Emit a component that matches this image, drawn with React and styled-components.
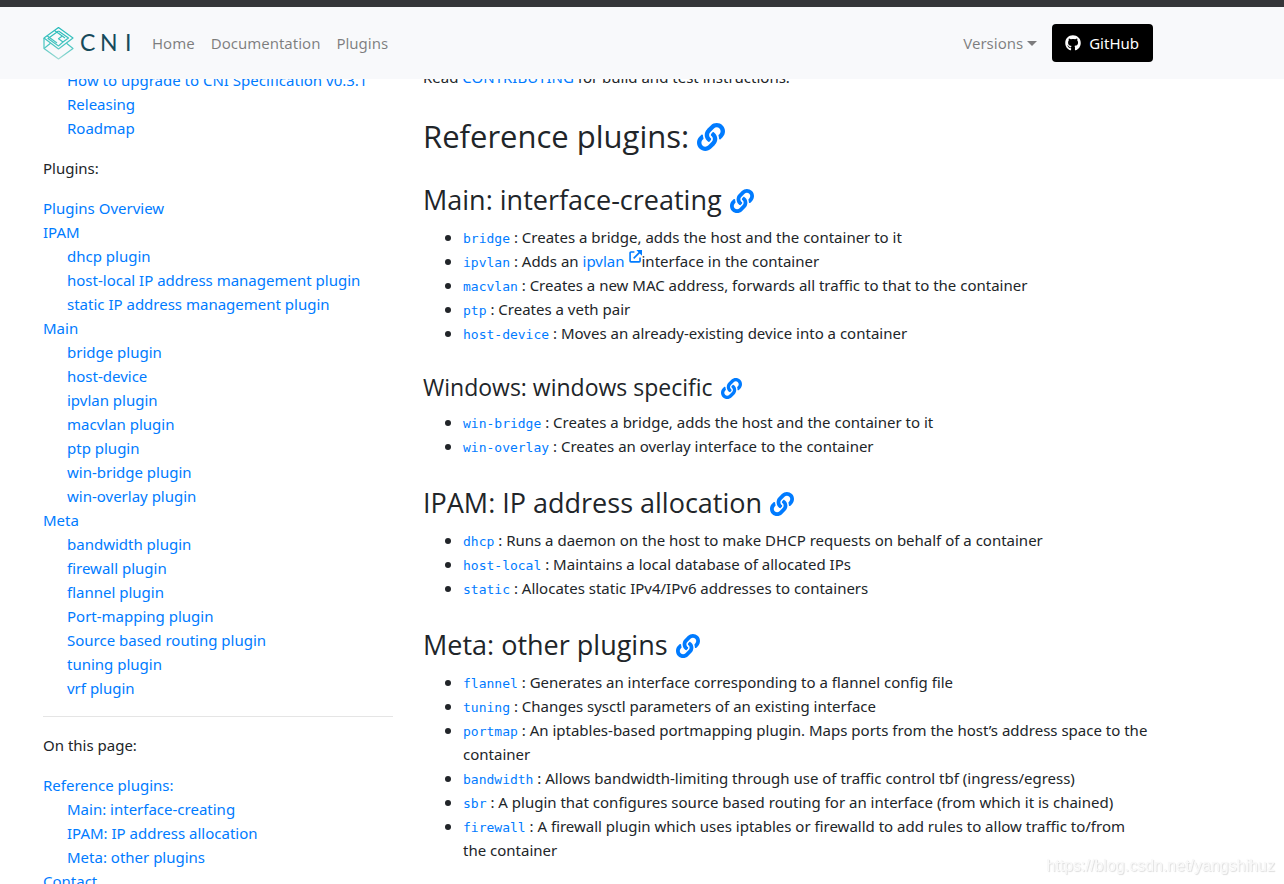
import React from "react";
import styled, { createGlobalStyle } from "styled-components";
import { FaGithub, FaLink } from "react-icons/fa";

const GlobalStyle = createGlobalStyle`
  *, *::before, *::after {
    box-sizing: border-box;
  }
  body {
    margin: 0;
    background: #fff;
    color: #212529;
    font-family: "Noto Sans", "Open Sans", sans-serif;
    font-size: 15px;
    line-height: 24px;
  }
`;

const Page = styled.div`
  height: 100vh;
  overflow: hidden;
`;

const Header = styled.header`
  position: sticky;
  top: 0;
  z-index: 10;
  background: #f8f9fb;
  border-top: 7px solid #353639;
`;

const Container = styled.div`
  max-width: 1168px;
  padding: 0 15px 0 43px;
`;

const Navbar = styled(Container)`
  display: flex;
  align-items: center;
  min-height: 72px;
`;

const Brand = styled.a`
  display: flex;
  margin-right: 9px;
`;

const NavLinks = styled.nav`
  display: flex;
  flex-grow: 1;
`;

const NavLink = styled.a`
  padding: 8px;
  color: rgba(0, 0, 0, 0.5);
  text-decoration: none;
`;

const VersionsButton = styled.button`
  display: flex;
  align-items: center;
  gap: 4px;
  padding: 8px;
  margin-right: 7px;
  border: 0;
  background: none;
  color: rgba(0, 0, 0, 0.5);
  font: inherit;
  cursor: pointer;
  &::after {
    content: "";
    border-top: 5px solid;
    border-left: 5px solid transparent;
    border-right: 5px solid transparent;
  }
`;

const GithubLink = styled.a`
  display: flex;
  align-items: center;
  gap: 8px;
  padding: 7px 14px 7px 13px;
  border-radius: 4px;
  background: #000;
  color: #fff;
  text-decoration: none;
`;

const Columns = styled(Container)`
  display: grid;
  grid-template-columns: minmax(0, 350fr) minmax(0, 730fr);
  gap: 30px;
`;

/* both columns are scrolled a little way under the header */
const Sidebar = styled.aside`
  margin-top: -11px;
`;

const Main = styled.main`
  margin-top: -14px;
`;

const Paragraph = styled.p`
  margin: 0 0 16px;
`;

const Link = styled.a`
  color: #007bff;
  text-decoration: none;
  &:hover {
    text-decoration: underline;
  }
`;

const Tree = styled.ul`
  margin: 0 0 ${(props) => (props.$nested ? 0 : "16px")};
  padding: 0 0 0 ${(props) => (props.$nested ? "24px" : 0)};
  list-style: none;
`;

const Divider = styled.hr`
  margin: 16px 0;
  border: 0;
  border-top: 1px solid rgba(0, 0, 0, 0.1);
`;

const headingSizes = {
  h2: { font: "31px", line: "38px", icon: "28px" },
  h3: { font: "27px", line: "34px", icon: "24px" },
  h4: { font: "23px", line: "29px", icon: "21px" },
};

const Heading = styled.h2`
  display: flex;
  align-items: center;
  gap: 8px;
  margin: 28px 0 8px;
  font-family: "Open Sans", "Noto Sans", sans-serif;
  font-size: ${(props) => headingSizes[props.as].font};
  font-weight: 400;
  line-height: ${(props) => headingSizes[props.as].line};
  svg {
    display: block;
    width: ${(props) => headingSizes[props.as].icon};
    height: ${(props) => headingSizes[props.as].icon};
    margin-top: 2px;
  }
`;

const PluginList = styled.ul`
  margin: 0 0 16px;
  padding-left: 40px;
  list-style: none;
`;

const PluginItem = styled.li`
  &::before {
    content: "";
    display: inline-block;
    width: 6px;
    height: 6px;
    margin: 0 12px 2px -18px;
    border-radius: 50%;
    background: currentColor;
  }
`;

const Code = styled.code`
  font-family: "DejaVu Sans Mono", monospace;
  font-size: 13px;
  line-height: 1;
`;

const ExternalSvg = styled.svg`
  margin-left: 4px;
  vertical-align: 4px;
`;

const Watermark = styled.div`
  position: fixed;
  right: 9px;
  bottom: 6px;
  color: #fafafa;
  font-family: "Liberation Sans", sans-serif;
  font-size: 16px;
  text-shadow: 1px 1px 1px #ddd, 0 0 1px #eee;
`;

const Logo = () => (
  <svg width="92" height="34" viewBox="0 0 92 34" role="img" aria-label="CNI">
    <defs>
      <linearGradient
        id="mark"
        gradientUnits="userSpaceOnUse"
        x1="0"
        y1="0"
        x2="0"
        y2="34"
      >
        <stop offset="0" stopColor="#22b9b9" />
        <stop offset="0.6" stopColor="#4cc6c1" />
        <stop offset="1" stopColor="#a5dcd5" />
      </linearGradient>
    </defs>
    <g fill="none" stroke="url(#mark)" strokeWidth="1.2" strokeLinejoin="round">
      <path d="M15.5 1.5 L30 12 L15.5 23 L1 12 Z" />
      <path d="M15.5 5 L25.5 12 L20 16 L15.5 12.8 L19 10.3" />
      <path d="M15.5 5 L5 12.5 L15.5 20 L20 16" />
      <path d="M4 9.8 L14 17 M11.5 4.5 L22 12" />
      <path d="M1 12 V22.5 L15.5 33 L30 22.5 L23.5 17.3" />
      <path d="M1 22.5 L7.5 17.3" />
    </g>
    <text
      x="37 57 82"
      y="25"
      fill="#164a5b"
      fontFamily="Lato, sans-serif"
      fontSize="23"
    >
      CNI
    </text>
  </svg>
);

const ExternalIcon = () => (
  <ExternalSvg width="13" height="13" viewBox="0 0 12 12" aria-hidden="true">
    <path
      d="M5 1.8 H1.8 Q1 1.8 1 2.6 V10.2 Q1 11 1.8 11 H9.4 Q10.2 11 10.2 10.2 V7 M4.3 7.7 L10 2"
      fill="none"
      stroke="currentColor"
      strokeWidth="1.5"
    />
    <path d="M6.8 0 H12 V5.2 Z" fill="currentColor" />
  </ExternalSvg>
);

const releaseLinks = [
  "How to upgrade to CNI Specification v0.3.1",
  "Releasing",
  "Roadmap",
];

const pluginLinks = [
  { label: "Plugins Overview" },
  {
    label: "IPAM",
    children: [
      "dhcp plugin",
      "host-local IP address management plugin",
      "static IP address management plugin",
    ],
  },
  {
    label: "Main",
    children: [
      "bridge plugin",
      "host-device",
      "ipvlan plugin",
      "macvlan plugin",
      "ptp plugin",
      "win-bridge plugin",
      "win-overlay plugin",
    ],
  },
  {
    label: "Meta",
    children: [
      "bandwidth plugin",
      "firewall plugin",
      "flannel plugin",
      "Port-mapping plugin",
      "Source based routing plugin",
      "tuning plugin",
      "vrf plugin",
    ],
  },
];

const pageLinks = [
  {
    label: "Reference plugins:",
    children: [
      "Main: interface-creating",
      "IPAM: IP address allocation",
      "Meta: other plugins",
    ],
  },
  { label: "Contact" },
];

const sections = [
  {
    title: "Main: interface-creating",
    level: "h3",
    items: [
      ["bridge", "Creates a bridge, adds the host and the container to it"],
      [
        "ipvlan",
        <>
          Adds an{" "}
          <Link href="#ipvlan">
            ipvlan
            <ExternalIcon />
          </Link>
          interface in the container
        </>,
      ],
      [
        "macvlan",
        "Creates a new MAC address, forwards all traffic to that to the container",
      ],
      ["ptp", "Creates a veth pair"],
      ["host-device", "Moves an already-existing device into a container"],
    ],
  },
  {
    title: "Windows: windows specific",
    level: "h4",
    items: [
      ["win-bridge", "Creates a bridge, adds the host and the container to it"],
      ["win-overlay", "Creates an overlay interface to the container"],
    ],
  },
  {
    title: "IPAM: IP address allocation",
    level: "h3",
    items: [
      [
        "dhcp",
        "Runs a daemon on the host to make DHCP requests on behalf of a container",
      ],
      ["host-local", "Maintains a local database of allocated IPs"],
      ["static", "Allocates static IPv4/IPv6 addresses to containers"],
    ],
  },
  {
    title: "Meta: other plugins",
    level: "h3",
    items: [
      [
        "flannel",
        "Generates an interface corresponding to a flannel config file",
      ],
      ["tuning", "Changes sysctl parameters of an existing interface"],
      [
        "portmap",
        "An iptables-based portmapping plugin. Maps ports from the host’s address space to the container",
      ],
      [
        "bandwidth",
        "Allows bandwidth-limiting through use of traffic control tbf (ingress/egress)",
      ],
      [
        "sbr",
        "A plugin that configures source based routing for an interface (from which it is chained)",
      ],
      [
        "firewall",
        "A firewall plugin which uses iptables or firewalld to add rules to allow traffic to/from the\u00a0container",
      ],
    ],
  },
];

const LinkTree = ({ items, nested }) => (
  <Tree $nested={nested}>
    {items.map((item) => {
      const label = item.label || item;
      return (
        <li key={label}>
          <Link href="#">{label}</Link>
          {item.children && <LinkTree items={item.children} nested />}
        </li>
      );
    })}
  </Tree>
);

const AnchorHeading = ({ level, children }) => (
  <Heading as={level}>
    {children}
    <Link href="#" aria-label="Link to this section">
      <FaLink />
    </Link>
  </Heading>
);

const App = () => {
  return (
    <Page>
      <GlobalStyle />
      <Header>
        <Navbar>
          <Brand href="#">
            <Logo />
          </Brand>
          <NavLinks>
            <NavLink href="#">Home</NavLink>
            <NavLink href="#">Documentation</NavLink>
            <NavLink href="#">Plugins</NavLink>
          </NavLinks>
          <VersionsButton type="button">Versions</VersionsButton>
          <GithubLink href="#">
            <FaGithub size={16} />
            GitHub
          </GithubLink>
        </Navbar>
      </Header>
      <Columns>
        <Sidebar>
          <Tree>
            <li>
              <LinkTree items={releaseLinks} nested />
            </li>
          </Tree>
          <Paragraph>Plugins:</Paragraph>
          <LinkTree items={pluginLinks} />
          <Divider />
          <Paragraph>On this page:</Paragraph>
          <LinkTree items={pageLinks} />
        </Sidebar>
        <Main>
          <Paragraph>
            Read <Link href="#">CONTRIBUTING</Link> for build and test
            instructions.
          </Paragraph>
          <AnchorHeading level="h2">Reference plugins:</AnchorHeading>
          {sections.map((section) => (
            <React.Fragment key={section.title}>
              <AnchorHeading level={section.level}>
                {section.title}
              </AnchorHeading>
              <PluginList>
                {section.items.map(([name, text]) => (
                  <PluginItem key={name}>
                    <Link href="#">
                      <Code>{name}</Code>
                    </Link>{" "}
                    : {text}
                  </PluginItem>
                ))}
              </PluginList>
            </React.Fragment>
          ))}
        </Main>
      </Columns>
      <Watermark>https://blog.csdn.net/yangshihuz</Watermark>
    </Page>
  );
};

export default App;
